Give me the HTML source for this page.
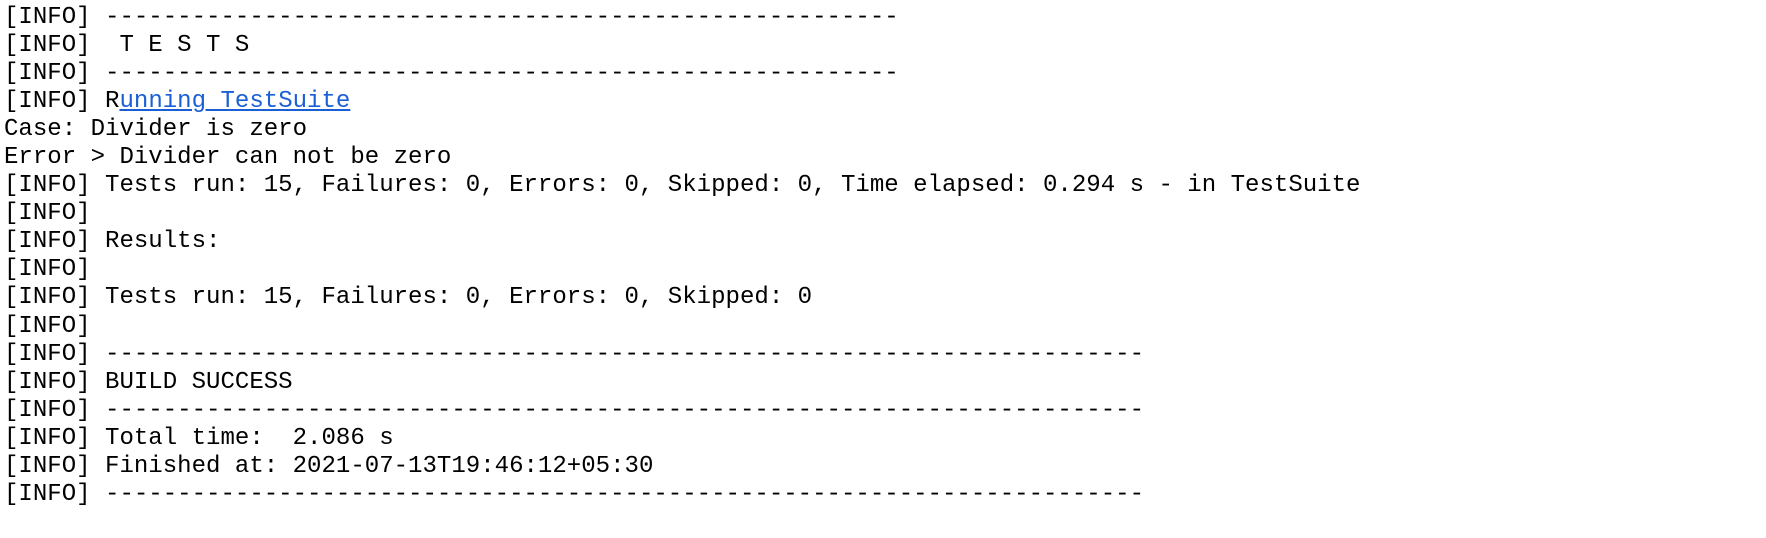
<!DOCTYPE html>
<html><head><meta charset="utf-8"><style>
html,body{margin:0;padding:0;background:#fff;width:1766px;height:538px;overflow:hidden}
pre{margin:0;padding:4px 0 0 4px;font-family:"Liberation Mono",monospace;font-size:24.05px;line-height:28.05px;color:#000;letter-spacing:0}
a{color:#1a5fd6;text-decoration:underline}
</style></head><body><pre>[INFO] -------------------------------------------------------
[INFO]  T E S T S
[INFO] -------------------------------------------------------
[INFO] R<a>unning TestSuite</a>
Case: Divider is zero
Error &gt; Divider can not be zero
[INFO] Tests run: 15, Failures: 0, Errors: 0, Skipped: 0, Time elapsed: 0.294 s - in TestSuite
[INFO]
[INFO] Results:
[INFO]
[INFO] Tests run: 15, Failures: 0, Errors: 0, Skipped: 0
[INFO]
[INFO] ------------------------------------------------------------------------
[INFO] BUILD SUCCESS
[INFO] ------------------------------------------------------------------------
[INFO] Total time:  2.086 s
[INFO] Finished at: 2021-07-13T19:46:12+05:30
[INFO] ------------------------------------------------------------------------
</pre></body></html>
